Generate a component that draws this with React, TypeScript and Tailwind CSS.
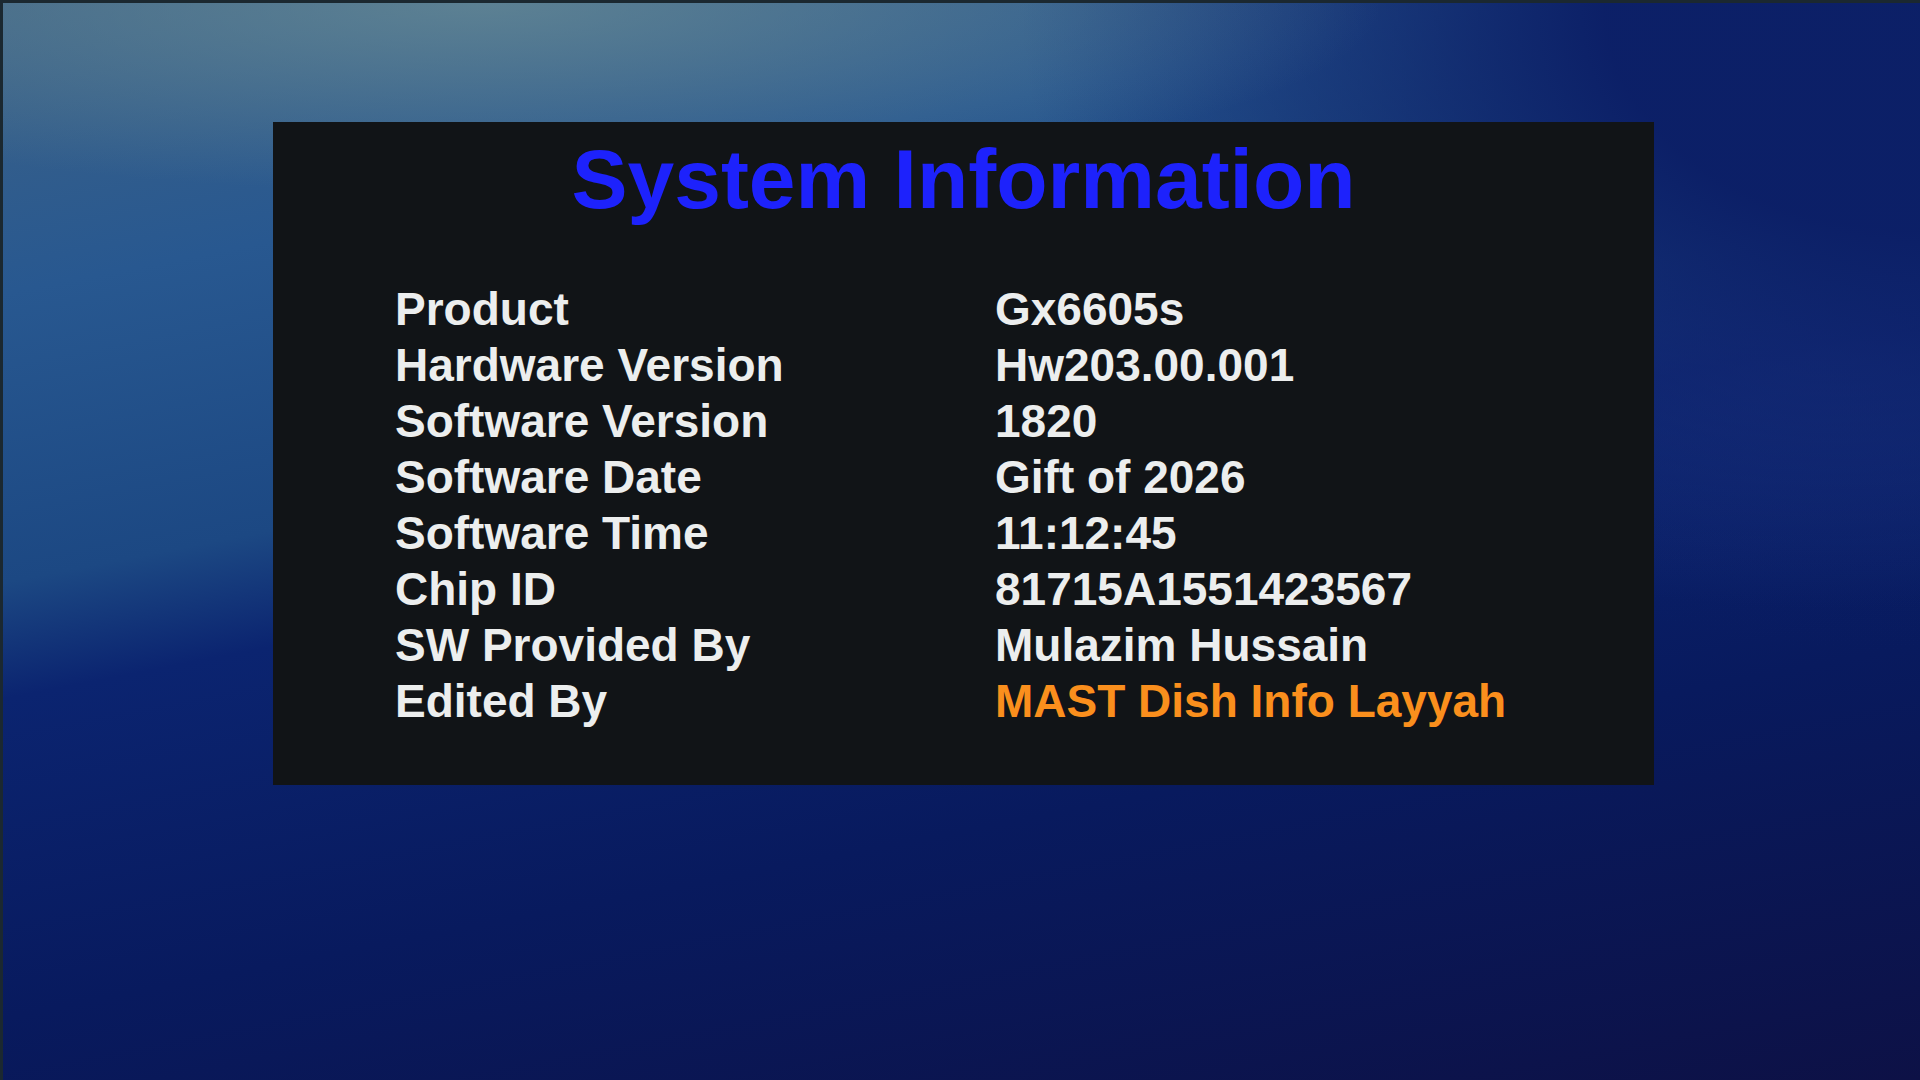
const rows: { label: string; value: string; accent?: boolean }[] = [
  { label: "Product", value: "Gx6605s" },
  { label: "Hardware Version", value: "Hw203.00.001" },
  { label: "Software Version", value: "1820" },
  { label: "Software Date", value: "Gift of 2026" },
  { label: "Software Time", value: "11:12:45" },
  { label: "Chip ID", value: "81715A1551423567" },
  { label: "SW Provided By", value: "Mulazim Hussain" },
  { label: "Edited By", value: "MAST Dish Info Layyah", accent: true },
];

export default function App() {
  return (
    <div className="h-[1080px] w-[1920px] overflow-hidden border-l-[3px] border-t-[3px] border-[#1b2830] bg-[radial-gradient(ellipse_900px_190px_at_25%_0%,rgba(105,140,150,0.75),rgba(105,140,150,0)),radial-gradient(ellipse_900px_650px_at_100%_0%,rgba(11,30,102,0.97)_35%,rgba(11,30,102,0)),radial-gradient(ellipse_600px_250px_at_95%_33%,rgba(40,70,150,0.5),rgba(40,70,150,0)),linear-gradient(169deg,#3d6387_0%,#285890_20%,#1c4883_40%,#0b2470_48%,#081a5e_70%,#0d1146_100%)] pl-[270px] pt-[119px] font-['Liberation_Sans',Arial,sans-serif] font-bold">
      <div className="flex h-[663px] w-[1381px] flex-col bg-[#111417] pl-[122px] pt-[15px]">
        <h1 className="-ml-[122px] text-center text-[84px] leading-[84px] text-[#1d22fc]">
          System Information
        </h1>
        <div className="mt-[60px] flex flex-col">
          {rows.map((r) => (
            <div key={r.label} className="flex text-[46px] leading-[56px] text-[#eceeee]">
              <span className="w-[600px] shrink-0">{r.label}</span>
              <span className={r.accent ? "text-[#fa8f1d]" : ""}>{r.value}</span>
            </div>
          ))}
        </div>
      </div>
    </div>
  );
}
